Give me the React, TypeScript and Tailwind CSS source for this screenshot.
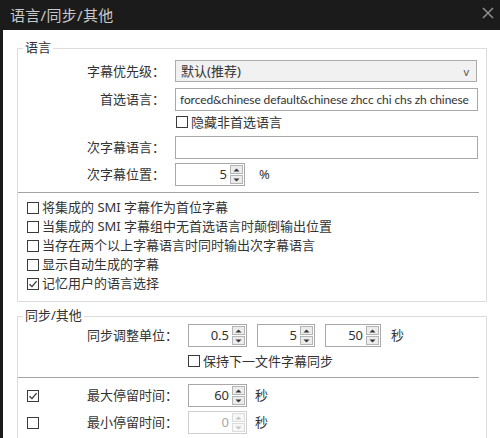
import React from "react";

const FONT = "font-['Segoe_UI','Noto_Sans','Noto_Sans_CJK_SC',sans-serif]";

function Check({ checked = false, className = "" }: { checked?: boolean; className?: string }) {
  return (
    <span
      className={`inline-flex w-[12px] h-[12px] shrink-0 border border-[#3a3a3a] bg-white items-center justify-center ${className}`}
    >
      {checked && (
        <svg width="10" height="10" viewBox="0 0 10 10">
          <path d="M1.5 5.2 L4 7.6 L8.6 2.2" fill="none" stroke="#333" strokeWidth="1.3" />
        </svg>
      )}
    </span>
  );
}

function Spinner({
  value,
  width,
  disabled = false,
}: {
  value: string;
  width: string;
  disabled?: boolean;
}) {
  const arrow = disabled ? "#c4c4c4" : "#333";
  return (
    <div
      className={`flex h-[23px] border bg-white ${width} ${
        disabled ? "border-[#cfcfcf] text-[#a8a8a8]" : "border-[#a8a8a8] text-[#333]"
      }`}
    >
      <div className="flex-1 flex items-center justify-end pr-[3px] text-[13px]">{value}</div>
      <div className="flex flex-col w-[13px] my-[1px] mr-[1px] gap-[1px]">
        <div
          className={`flex-1 flex items-center justify-center border ${
            disabled ? "border-[#dcdcdc] bg-[#f7f7f7]" : "border-[#b5b5b5] bg-[#ececec]"
          }`}
        >
          <svg width="7" height="4" viewBox="0 0 7 4">
            <path d="M0.5 3.5 L3.5 0.5 L6.5 3.5 Z" fill={arrow} />
          </svg>
        </div>
        <div
          className={`flex-1 flex items-center justify-center border ${
            disabled ? "border-[#dcdcdc] bg-[#f7f7f7]" : "border-[#b5b5b5] bg-[#ececec]"
          }`}
        >
          <svg width="7" height="4" viewBox="0 0 7 4">
            <path d="M0.5 0.5 L3.5 3.5 L6.5 0.5 Z" fill={arrow} />
          </svg>
        </div>
      </div>
    </div>
  );
}

const checks = [
  { label: "将集成的 SMI 字幕作为首位字幕", checked: false },
  { label: "当集成的 SMI 字幕组中无首选语言时颠倒输出位置", checked: false },
  { label: "当存在两个以上字幕语言时同时输出次字幕语言", checked: false },
  { label: "显示自动生成的字幕", checked: false },
  { label: "记忆用户的语言选择", checked: true },
];

export default function App() {
  return (
    <div className={`w-[500px] h-[438px] overflow-hidden bg-white text-[#333] text-[13px] leading-none ${FONT}`}>
      {/* Title bar */}
      <div className="h-[30px] bg-[#1b1b1b] flex items-center justify-between pl-[10px] pr-[6px]">
        <span className="text-[15px] text-[#c9c9c9] tracking-[0.3px]">语言/同步/其他</span>
        <svg width="12" height="12" viewBox="0 0 12 12" className="mb-[4px]">
          <path d="M1 1 L11 11 M11 1 L1 11" stroke="#8c8c8c" strokeWidth="1.6" />
        </svg>
      </div>

      <div className="h-[408px] border-l-[3px] border-[#1b1b1b] pl-[14px] pt-[18px]">
        {/* 语言 */}
        <div className="relative w-[470px] h-[254px] border border-[#dcdcdc] pt-[11px]">
          <span className="absolute -top-[8px] left-[5px] bg-white px-[2px] text-[13px]">语言</span>

          <div className="flex items-center gap-[10px]">
            <span className="w-[147px] text-right">字幕优先级：</span>
            <div className="w-[302px] h-[22px] border border-[#acacac] bg-[#f1f1f1] flex items-center justify-between pl-[5px] pr-[7px]">
              <span>默认(推荐)</span>
              <span className="text-[11px] text-[#555]">v</span>
            </div>
          </div>

          <div className="flex items-center gap-[10px] mt-[6px]">
            <span className="w-[147px] text-right">首选语言：</span>
            <div className="w-[303px] h-[23px] border border-[#a8a8a8] bg-white flex items-center pl-[4px] font-['Lato',sans-serif] text-[12px] tracking-[-0.1px] whitespace-nowrap overflow-hidden">
              forced&amp;chinese default&amp;chinese zhcc chi chs zh chinese
            </div>
          </div>

          <div className="flex items-center h-[22px] pl-[158px] gap-[3px]">
            <Check />
            <span>隐藏非首选语言</span>
          </div>

          <div className="flex items-center gap-[10px] mt-[3px]">
            <span className="w-[147px] text-right">次字幕语言：</span>
            <div className="w-[303px] h-[23px] border border-[#a8a8a8] bg-white" />
          </div>

          <div className="flex items-center gap-[10px] mt-[4px]">
            <span className="w-[147px] text-right">次字幕位置：</span>
            <Spinner value="5" width="w-[70px]" />
            <span className="ml-[4px]">%</span>
          </div>

          <div className="h-px bg-[#a3a3a3] mt-[6px] mr-[7px]" />

          <div className="flex flex-col mt-[5px]">
            {checks.map((c) => (
              <div key={c.label} className="flex items-center h-[19px] pl-[9px] gap-[3px]">
                <Check checked={c.checked} />
                <span>{c.label}</span>
              </div>
            ))}
          </div>
        </div>

        {/* 同步/其他 */}
        <div className="relative w-[470px] h-[200px] border border-[#dcdcdc] mt-[14px] pt-[7px]">
          <span className="absolute -top-[8px] left-[5px] bg-white px-[2px] text-[13px]">同步/其他</span>

          <div className="flex items-center gap-[10px]">
            <span className="w-[160px] text-right">同步调整单位：</span>
            <Spinner value="0.5" width="w-[59px]" />
            <Spinner value="5" width="w-[58px]" />
            <Spinner value="50" width="w-[56px]" />
            <span>秒</span>
          </div>

          <div className="flex items-center h-[22px] mt-[3px] pl-[170px] gap-[3px]">
            <Check />
            <span>保持下一文件字幕同步</span>
          </div>

          <div className="h-px bg-[#a3a3a3] mt-[5px] mr-[7px]" />

          <div className="flex items-center mt-[6px]">
            <Check checked className="ml-[9px]" />
            <span className="w-[139px] text-right">最大停留时间：</span>
            <span className="w-[10px]" />
            <Spinner value="60" width="w-[59px]" />
            <span className="ml-[8px]">秒</span>
          </div>

          <div className="flex items-center mt-[4px]">
            <Check className="ml-[9px]" />
            <span className="w-[139px] text-right">最小停留时间：</span>
            <span className="w-[10px]" />
            <Spinner value="0" width="w-[59px]" disabled />
            <span className="ml-[8px]">秒</span>
          </div>
        </div>
      </div>
    </div>
  );
}
